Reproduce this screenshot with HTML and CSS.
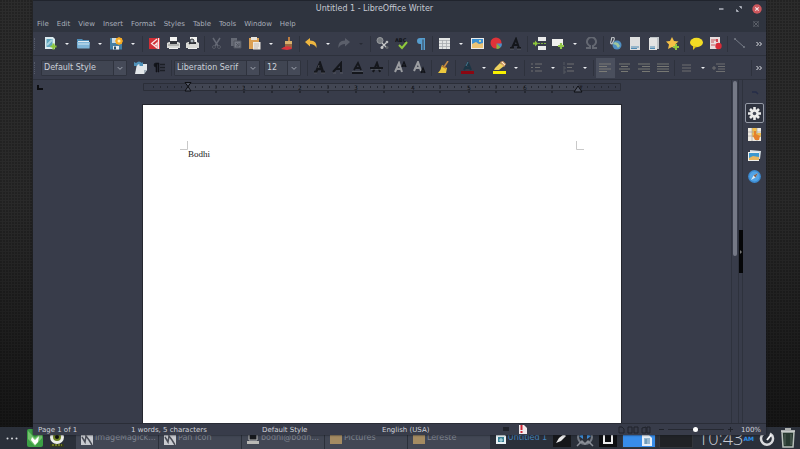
FILE: index.html
```html
<!DOCTYPE html>
<html lang="en">
<head>
<meta charset="utf-8">
<title>Untitled 1 - LibreOffice Writer</title>
<link rel="stylesheet" href="styles.css">
</head>
<body>
<footer class="taskbar">
  <button class="dots" aria-label="Menu"><svg width="12" height="3" viewBox="0 0 12 3"><g fill="#d8dade"><circle cx="1.5" cy="1.5" r="1"/><circle cx="6" cy="1.5" r="1"/><circle cx="10.500" cy="1.5" r="1"/></g></svg></button>
  <button class="launcher" aria-label="Midori"><svg width="16" height="18" viewBox="0 0 16 18"><rect width="16" height="18" rx="2" fill="#3c9f45"/><path d="M1 2L8 9l7-7v7l-7 8-7-7z" fill="#73c36d"/><path d="M5 8l3 3 4-4-1 6-3 3-4-5z" fill="#fff"/></svg></button>
  <button class="launcher" aria-label="Player"><svg width="16" height="18" viewBox="0 0 16 18"><circle cx="8" cy="8" r="7" fill="#eceee8"/><circle cx="8" cy="8" r="4" fill="#708326"/><circle cx="8" cy="8" r="2" fill="#111"/><path d="M1 15h14v3H1z" fill="#33391d"/><path d="M3 16h10" stroke="#a7b52c" stroke-dasharray="2 1"/></svg></button>
  <div class="tasks">
    <button class="task"><svg width="12" height="14" viewBox="0 0 12 14"><path d="M0 0h12v14H0z" fill="#c9cbd0"/><path d="M1 6l3 5 1-6 3 4 3 5" fill="none" stroke="#4a4d57" stroke-width="1.500"/></svg><span>ImageMagick...</span></button>
    <button class="task"><svg width="12" height="14" viewBox="0 0 12 14"><path d="M0 0h12v14H0z" fill="#c9cbd0"/><path d="M1 6l3 5 1-6 3 4 3 5" fill="none" stroke="#4a4d57" stroke-width="1.500"/></svg><span>Pan icon</span></button>
    <button class="task"><svg width="12" height="14" viewBox="0 0 12 14"><path d="M2 2h8v7H2z" fill="#16181c" stroke="#bbb"/><path d="M0 10h12v3H0z" fill="#b9b9b6"/></svg><span>bodhi@bodh...</span></button>
    <button class="task"><svg width="12" height="14" viewBox="0 0 12 14"><path d="M0 2h5l1 2h6v9H0z" fill="#a48b62"/></svg><span>Pictures</span></button>
    <button class="task"><svg width="12" height="14" viewBox="0 0 12 14"><path d="M0 2h5l1 2h6v9H0z" fill="#a48b62"/></svg><span>Lereste</span></button>
    <button class="task current"><svg width="10" height="12" viewBox="0 0 10 12"><path d="M0 1h7l3 3v8H0z" fill="#e7f0f3"/><path d="M2 5h6v5H2z" fill="#3b8297"/><path d="M3 8h4M5 6v4" stroke="#bfe0e5"/></svg><span>Untitled 1</span></button>
  </div>
  <div class="tray">
    <button aria-label="Editor"><svg width="18" height="18" viewBox="0 0 18 18"><path d="M0 0h18v18H0z" fill="#16171a"/><path d="M3 14l3-5 5-4 2 2-5 5z" fill="#e8e8e8"/></svg></button>
    <button aria-label="Updates"><svg width="20" height="18" viewBox="0 0 20 18"><circle cx="10" cy="8" r="7" fill="none" stroke="#737983" stroke-width="2"/><path d="M4 7l4-2v5zM16 7l-4-2v5z" fill="#3d8bd4"/><path d="M2 17l5-5 3 3 3-3 5 5" fill="none" stroke="#8a8e96" stroke-width="1.500"/></svg></button>
    <button aria-label="Clipboard"><svg width="18" height="18" viewBox="0 0 18 18"><path d="M0 0h18v18H0z" fill="#0e0f12"/><path d="M5 3h8v11H5z" fill="none" stroke="#ededed" stroke-width="2"/></svg></button>
  </div>
  <div class="pager">
    <button class="desk on" aria-label="Desktop 1"><svg width="10" height="11" viewBox="0 0 10 11"><path d="M0 0h7l3 3v8H0z" fill="#e8f0f8"/><path d="M2 4h6M2 6h6M2 8h6M4 4v5" stroke="#4680a8"/></svg></button>
    <button class="desk" aria-label="Desktop 2"></button>
  </div>
  <time class="clock">10:43<small>AM</small></time>
  <button class="gauge" aria-label="Power"><svg width="16" height="18" viewBox="0 0 16 18"><path d="M11 4.500a6 6 0 1 1-6 0" fill="none" stroke="#d9dadd" stroke-width="2.500"/><path d="M8 11l4-5" stroke="#fff" stroke-width="2"/></svg></button>
  <button class="trash" aria-label="Trash"><svg width="16" height="20" viewBox="0 0 16 20"><path d="M2 4h12l-1 15H3z" fill="#283a31" stroke="#b7bfba" stroke-width="1.500"/><path d="M1 3h14M5 1h6" stroke="#d9dcd9" stroke-width="1.500"/><path d="M5 6v11M11 6v11" stroke="#53635b"/></svg></button>
</footer>

<main class="window">
  <header class="titlebar">
    <h1>Untitled 1 - LibreOffice Writer</h1>
    <div class="controls">
      <button aria-label="Minimize"><svg width="10" height="10" viewBox="0 0 10 10"><path d="M3 5h4.500" stroke="#c4c8d2" stroke-width="1.300"/></svg></button>
      <button aria-label="Restore"><svg width="10" height="10" viewBox="0 0 10 10"><path d="M5.500 2.500h2v2zM2.500 5.500v2h2z" fill="#c4c8d2" stroke="#c4c8d2" stroke-width=".6"/></svg></button>
      <button aria-label="Close"><svg width="10" height="10" viewBox="0 0 10 10"><circle cx="5" cy="5" r="4.700" fill="#cc575d"/><path d="M3.300 3.300l3.400 3.400M6.700 3.300L3.300 6.700" stroke="#f4e3e4" stroke-width="1.100"/></svg></button>
    </div>
  </header>
  <nav class="menubar">
    <button>File</button><button>Edit</button><button>View</button><button>Insert</button><button>Format</button><button>Styles</button><button>Table</button><button>Tools</button><button>Window</button><button>Help</button>
    <button class="docclose" aria-label="Close document"><svg width="6" height="6" viewBox="0 0 6 6"><path d="M1 1l4 4M5 1L1 5M0 0h6v6H0z" fill="none" stroke="#5b5f68"/></svg></button>
  </nav>

  <div class="toolbar standard">
    <i class="grip"></i>
    <button class="tool" aria-label="New"><svg viewBox="0 0 13 13"><path d="M1 0h8l2 2v10H1z" fill="#dcebf0"/><path d="M2.500 2h6v8h-6z" fill="#5fa5bf"/><path d="M3 8l5-5" stroke="#a8d2de" stroke-width="2"/><path d="M9.500 6.500v6M6.500 9.500h6" stroke="#8cc63a" stroke-width="2.200"/></svg></button><button class="drop" aria-label="New options"></button>
    <button class="tool" aria-label="Open"><svg viewBox="0 0 13 13"><path d="M0 2h5l1 1h6v8H0z" fill="#4e8db8"/><path d="M1 4h11v2H1z" fill="#e4edf2"/><path d="M0 5h13l-.5 6.500H.5z" fill="#7fb5d8"/><path d="M1 6h11v2H1z" fill="#a8cee5"/></svg></button><button class="drop" aria-label="Open options"></button>
    <button class="tool" aria-label="Save"><svg viewBox="0 0 13 13"><path d="M0 1h12v11.500H0z" fill="#447fa4"/><path d="M2 1h6v5H2z" fill="#c9dce7"/><path d="M3 9h6v3.500H3z" fill="#e6edf0"/><path d="M4 9.500h2v3H4z" fill="#2f5268"/><circle cx="9" cy="4" r="3.500" fill="#f5a923"/><path d="M9 0v8M5 4h8M6.200 1.200l5.600 5.600M11.800 1.200L6.200 6.800" stroke="#f5a923"/><circle cx="9" cy="4" r="1.500" fill="#fff0b6"/></svg></button><button class="drop" aria-label="Save options"></button>
    <i class="sep"></i>
    <button class="tool" aria-label="Export PDF"><svg viewBox="0 0 13 13"><path d="M1 1h11v11H1z" fill="#d12f36"/><path d="M9 2L3.500 6.500 9 11V6L6 9M10.500 1v11" fill="none" stroke="#f8e8e8" stroke-width="1.200"/></svg></button>
    <button class="tool" aria-label="Print"><svg viewBox="0 0 13 13"><path d="M3 0h7v6H3z" fill="#f4f4f2"/><path d="M0 6l2-1h9l2 1v5H0z" fill="#d9dad7"/><path d="M3 4h7v3H3z" fill="#33353b"/><path d="M1 8h11" stroke="#8c8e8d"/><path d="M2 11h9v1H2z" fill="#f3f3f1"/></svg></button>
    <button class="tool" aria-label="Print preview"><svg viewBox="0 0 13 13"><path d="M4 0h7v6H4z" fill="#f4f4f2"/><path d="M0 6l2-1h9l2 1v5H0z" fill="#d9dad7"/><path d="M3 5h7v2H3z" fill="#33353b"/><path d="M2 11h9v1H2z" fill="#f3f3f1"/><circle cx="6" cy="4" r="2" fill="#a9b2b9" stroke="#30333a"/><path d="M4.500 5.500L3 7" stroke="#30333a" stroke-width="1.500"/></svg></button>
    <i class="sep"></i>
    <button class="tool" aria-label="Cut"><svg viewBox="0 0 13 13"><path d="M3 1l5 8M10 1L5 9" stroke="#656975" stroke-width="1.500"/><circle cx="4" cy="10" r="1.500" fill="none" stroke="#565a65"/><circle cx="9" cy="10" r="1.500" fill="none" stroke="#565a65"/></svg></button>
    <button class="tool" aria-label="Copy"><svg viewBox="0 0 13 13"><path d="M2 1h6v8H2z" fill="#666a75"/><path d="M5 4h7v7H5z" fill="#757984" stroke="#50545f"/><path d="M7 6l3 3M10 6v3H7" stroke="#50545f" fill="none"/></svg></button>
    <button class="tool" aria-label="Paste"><svg viewBox="0 0 13 13"><path d="M1 1h10v11H1z" fill="#dca052"/><path d="M3 0h6v3H3z" fill="#e8e5dd"/><path d="M5 5h7.500v7.500H5z" fill="#eee9e0"/><path d="M6 7h5M6 9h5M6 11h4" stroke="#b4aea5" stroke-width=".7"/></svg></button><button class="drop" aria-label="Paste options"></button>
    <button class="tool" aria-label="Clone formatting"><svg viewBox="0 0 13 13"><path d="M7 0h2v4H7z" fill="#bc7c41"/><path d="M4 4h7v3H4z" fill="#d6b06c"/><path d="M4 7h7v4H4z" fill="#9a6741"/><path d="M0 12q4-4 10-2l1 2-5 1z" fill="#d8343d"/></svg></button>
    <i class="sep"></i>
    <button class="tool" aria-label="Undo"><svg viewBox="0 0 13 13"><path d="M0 5l5-4v2.500c5 0 7 3 6.500 7.500C10 8 8 7 5 7v2.500z" fill="#eeb640"/></svg></button><button class="drop" aria-label="Undo history"></button>
    <button class="tool" aria-label="Redo"><svg viewBox="0 0 13 13"><path d="M12 5L7 1v2.500C2 3.500 0 6.500.5 11 2 8 4 7 7 7v2.500z" fill="#5b5f6b"/></svg></button><button class="drop dim" aria-label="Redo history"></button>
    <i class="sep"></i>
    <button class="tool" aria-label="Find and replace"><svg viewBox="0 0 13 13"><circle cx="4" cy="3.500" r="3" fill="#777b80" stroke="#989b9e"/><path d="M6 6l5 5M11 5l-5 5" stroke="#c8c9c9" stroke-width="1.200"/><circle cx="11" cy="5" r="1.300" fill="#b8babb"/><circle cx="6" cy="10.500" r="1.500" fill="#c8c9c9"/><circle cx="11" cy="10.500" r="1.500" fill="#5f6267"/></svg></button>
    <button class="tool" aria-label="Spelling"><svg viewBox="0 0 13 13"><text x="0" y="4.500" class="abc">ABC</text><path d="M4 8l3 3 5-6" fill="none" stroke="#8fc93b" stroke-width="2"/></svg></button>
    <button class="tool" aria-label="Formatting marks"><svg viewBox="0 0 13 13"><path d="M11 1H6a3 3 0 0 0 0 6h1v6h1.500V2.500H9.500V13H11z" fill="#569dce"/></svg></button>
    <i class="sep"></i>
    <button class="tool" aria-label="Table"><svg viewBox="0 0 13 13"><path d="M1 1h11v11H1z" fill="#e2e4e4"/><path d="M1 3.500h11M1 6.500h11M1 9.500h11M4.500 3v9M8.500 3v9" stroke="#a7abae" stroke-width=".8"/></svg></button><button class="drop" aria-label="Table options"></button>
    <button class="tool" aria-label="Image"><svg viewBox="0 0 13 13"><path d="M0 1h13v11H0z" fill="#ececea"/><path d="M1 2h11v9H1z" fill="#3d91d2"/><path d="M1 7l4-2 3 2 4-1v5H1z" fill="#edc474"/><circle cx="9" cy="4" r="1" fill="#f5ee9c"/></svg></button>
    <button class="tool" aria-label="Chart"><svg viewBox="0 0 13 13"><circle cx="6" cy="6" r="5.500" fill="#df3339"/><path d="M6.500 6.500H12a5.500 5.500 0 0 1-1.500 4z" fill="#4c8ec9"/><path d="M6.500 6.500l4 4a5.500 5.500 0 0 1-4 1.500z" fill="#83b646"/></svg></button>
    <button class="tool" aria-label="Text box"><svg viewBox="0 0 13 13"><path d="M1 11h4M8 11h4M3 11l4-9 3 9M4 8h5" fill="none" stroke="#14161b" stroke-width="2"/><path d="M1 12h4M8 12h4" stroke="#777b82" stroke-width=".5"/></svg></button>
    <i class="sep"></i>
    <button class="tool" aria-label="Page break"><svg viewBox="0 0 13 13"><path d="M5 0h8v4H5zM5 9h8v4H5z" fill="#e9eaea"/><path d="M5 6.500h8" stroke="#7daf3f" stroke-dasharray="2 1"/><path d="M2 3.500L5 6.500 2 9.500V7.500H0v-2h2z" fill="#8dc63a"/></svg></button>
    <button class="tool" aria-label="Field"><svg viewBox="0 0 13 13"><path d="M0 2h11v7H0z" fill="#efefed"/><path d="M9 6v6M6 9h6" stroke="#92c54a" stroke-width="2.200"/></svg></button><button class="drop" aria-label="Field options"></button>
    <button class="tool" aria-label="Special character"><svg viewBox="0 0 13 13"><path d="M1 11h4V9A4.500 4.500 0 1 1 8 9v2h4" fill="none" stroke="#646872" stroke-width="2"/></svg></button>
    <i class="sep"></i>
    <button class="tool" aria-label="Hyperlink"><svg viewBox="0 0 13 13"><circle cx="8" cy="8" r="4.500" fill="#4f8fc3"/><path d="M6 5l3 1 2 3-2 2-2-3-3-1z" fill="#9fc69c"/><path d="M3 0q3 0 2 3L3 7Q1 7 2 4z" fill="none" stroke="#c9cdd0" stroke-width="1.100"/></svg></button>
    <button class="tool" aria-label="Footnote"><svg viewBox="0 0 13 13"><path d="M2 0h10v13H2z" fill="#dedfdf"/><path d="M3 10h8M3 11.500h6" stroke="#518cb4"/></svg></button>
    <button class="tool" aria-label="Endnote"><svg viewBox="0 0 13 13"><path d="M3 0h9v12H3z" fill="#bfc4c8"/><path d="M2 1h8v12H2z" fill="#e3e4e4"/><path d="M3 10h5M3 11.500h5" stroke="#518cb4"/></svg></button>
    <button class="tool" aria-label="Bookmark"><svg viewBox="0 0 13 13"><path d="M6 0l2 4 4.500.5L9 7.500l1 4.500-4-2-4 2 1-4.500L0 4.500 4 4z" fill="#f5c047"/><path d="M10 7v6M7 10h6" stroke="#8ec63f" stroke-width="2"/></svg></button>
    <i class="sep"></i>
    <button class="tool" aria-label="Comment"><svg viewBox="0 0 13 13"><ellipse cx="6.500" cy="5.500" rx="6.500" ry="4.700" fill="#f2dc24"/><path d="M3 9v4l4-4z" fill="#e2c51c"/></svg></button>
    <button class="tool" aria-label="Track changes"><svg viewBox="0 0 13 13"><path d="M1 0h10v12H1z" fill="#e8dddd"/><path d="M2 3h5M2 5h3M2 8h4" stroke="#c7575c" stroke-width="1"/><path d="M7 2h2v3H7z" fill="#cf4951"/><circle cx="9.500" cy="9" r="3.200" fill="#d92c38"/></svg></button>
    <i class="sep"></i>
    <button class="tool" aria-label="Line"><svg viewBox="0 0 13 13"><path d="M2 2l9 8" stroke="#767b86"/><circle cx="2" cy="2" r="1" fill="#767b86"/><circle cx="11" cy="10" r="1" fill="#767b86"/></svg></button>
    <button class="more" aria-label="More"><svg width="6" height="6" viewBox="0 0 6 6"><path d="M.5 1l2 2-2 2M3.500 1l2 2-2 2" fill="none" stroke="#e3e5e9"/></svg></button>
  </div>

  <div class="toolbar format">
    <i class="grip"></i>
    <span class="combo style"><select aria-label="Paragraph style"><option>Default Style</option></select><svg viewBox="0 0 13 14"><path d="M4 6l2.500 2.500L9 6" fill="none" stroke="#aab0bb"/></svg></span>
    <button class="tool" aria-label="Update style"><svg viewBox="0 0 13 13"><path d="M3 3h10v6l-3 4H1z" fill="#e3e7ea"/><path d="M13 9h-3v4z" fill="#a4b1bb"/><path d="M0 5V1l2 1q3-3 6 0l1-1v4H5l1-1Q4 2 3 5z" fill="#4f91b9"/></svg></button>
    <button class="tool" aria-label="New style"><svg viewBox="0 0 13 13"><path d="M6 2H3a2 2 0 0 0 0 4v5h1V3h1v8h1z" fill="#111318" stroke="#111318" stroke-width=".6"/><path d="M7 3.500h5M7 6.500h5M7 9.500h5" stroke="#1c1f26" stroke-width="1.300"/></svg></button>
    <i class="sep"></i>
    <span class="combo font"><select aria-label="Font name"><option>Liberation Serif</option></select><svg viewBox="0 0 13 14"><path d="M4 6l2.500 2.500L9 6" fill="none" stroke="#aab0bb"/></svg></span>
    <span class="combo size"><select aria-label="Font size"><option>12</option></select><svg viewBox="0 0 13 14"><path d="M4 6l2.500 2.500L9 6" fill="none" stroke="#aab0bb"/></svg></span>
    <i class="sep"></i>
    <button class="tool" aria-label="Bold"><svg viewBox="0 0 13 13"><path d="M1 11h3M8 11h4M3 11l4-9 3 9M4 8h5" fill="none" stroke="#15171c" stroke-width="2.400"/><path d="M1 12h3M8 12h4M6 4L5 7" stroke="#80838a" stroke-width=".5"/></svg></button>
    <button class="tool" aria-label="Italic"><svg viewBox="0 0 13 13"><path d="M1 11l8-9 0 9M4 8h5" fill="none" stroke="#15171c" stroke-width="2"/><path d="M1 12h3M8 12h3" stroke="#70737b" stroke-width=".5"/></svg></button>
    <button class="tool" aria-label="Underline"><svg viewBox="0 0 13 13"><path d="M3 9l4-7 3 7M4 7h5M1 12h11" fill="none" stroke="#15171c" stroke-width="1.800"/><path d="M1 10.500h11" stroke="#60646c" stroke-width=".6"/></svg></button>
    <button class="tool" aria-label="Strikethrough"><svg viewBox="0 0 13 13"><path d="M3 11l4-9 3 9M0 7h13" fill="none" stroke="#15171c" stroke-width="2"/><path d="M1 8.500h10" stroke="#60646c" stroke-width=".6"/></svg></button>
    <i class="sep"></i>
    <button class="tool" aria-label="Superscript"><svg viewBox="0 0 13 13"><path d="M1 11l4-9 3 9M2 8h5" fill="none" stroke="#9b9da1" stroke-width="2"/><path d="M8 6l2-5 2 5M8.500 5h3" fill="none" stroke="#111318" stroke-width="1.300"/></svg></button>
    <button class="tool" aria-label="Subscript"><svg viewBox="0 0 13 13"><path d="M1 10l4-9 3 9M2 7h5" fill="none" stroke="#9b9da1" stroke-width="2"/><path d="M8 12l2-5 2 5M8.500 11h3" fill="none" stroke="#111318" stroke-width="1.300"/></svg></button>
    <i class="sep"></i>
    <button class="tool" aria-label="Clear formatting"><svg viewBox="0 0 13 13"><path d="M11 0L7 6" stroke="#c68a45" stroke-width="1.500"/><path d="M5 4l5 3-1 5H1q3-3 4-8z" fill="#ecc83d"/><path d="M5 5l4 2" stroke="#b5762e" stroke-width="1.500"/></svg></button>
    <i class="sep"></i>
    <button class="tool" aria-label="Font colour"><svg viewBox="0 0 13 13"><path d="M3 9l4-7 3 7M4 7h5" fill="none" stroke="#1b3544" stroke-width="2"/><path d="M5 5l2-4" stroke="#487992"/><path d="M0 10h13v3H0z" fill="#8b0711"/></svg></button><button class="drop" aria-label="Font colours"></button>
    <button class="tool" aria-label="Highlight"><svg viewBox="0 0 13 13"><path d="M2 7l5-5 4 3-5 4H1z" fill="#eed25e"/><path d="M7 1l3-1 3 3-2 3z" fill="#e1a76c"/><path d="M9 1l3 3" stroke="#f4eee0"/><path d="M0 10h13v3H0z" fill="#f8f000"/></svg></button><button class="drop" aria-label="Highlight colours"></button>
    <i class="sep"></i>
    <button class="tool" aria-label="Bullets"><svg viewBox="0 0 13 13"><path d="M1 3h2M1 6.500h2M1 10h2M5 3h7M5 6.500h5M5 10h7" stroke="#6e6f70"/></svg></button><button class="drop" aria-label="Bullet options"></button>
    <button class="tool" aria-label="Numbering"><svg viewBox="0 0 13 13"><path d="M2 1v3M1 6h2v2H1M1 10h2v2H1" stroke="#555961" fill="none"/><path d="M5 3h7M5 6.500h5M5 10h7" stroke="#6e6f70"/></svg></button><button class="drop" aria-label="Numbering options"></button>
    <i class="sep"></i>
    <button class="tool pressed" aria-label="Align left"><svg viewBox="0 0 13 13"><path d="M0 3h12M0 5.500h8M0 8h12M0 10.500h8" stroke="#7b7b76"/></svg></button>
    <button class="tool" aria-label="Center"><svg viewBox="0 0 13 13"><path d="M1 3h11M3 5.500h7M1 8h11M3 10.500h7" stroke="#777873"/></svg></button>
    <button class="tool" aria-label="Align right"><svg viewBox="0 0 13 13"><path d="M1 3h12M5 5.500h8M1 8h12M5 10.500h8" stroke="#777873"/></svg></button>
    <button class="tool" aria-label="Justify"><svg viewBox="0 0 13 13"><path d="M1 3h12M1 5.500h12M1 8h12M1 10.500h12" stroke="#777873"/></svg></button>
    <i class="sep"></i>
    <button class="tool" aria-label="Line spacing"><svg viewBox="0 0 13 13"><path d="M2 4h9M2 7h9M2 10h9" stroke="#6e6f70"/></svg></button><button class="drop" aria-label="Spacing options"></button>
    <button class="tool" aria-label="Increase indent"><svg viewBox="0 0 13 13"><path d="M4 3h9M6 5.500h7M6 8h7M4 10.500h9" stroke="#6e6f70"/><path d="M0 7h4M2 5v4" stroke="#6e6f70"/></svg></button>
    <i class="sep last"></i>
    <button class="more" aria-label="More"><svg width="6" height="6" viewBox="0 0 6 6"><path d="M.5 1l2 2-2 2M3.500 1l2 2-2 2" fill="none" stroke="#e3e5e9"/></svg></button>
  </div>

  <div class="work">
    <section class="canvas">
      <div class="rulerbar">
        <svg class="tabtype" width="6" height="6" viewBox="0 0 6 6"><path d="M1 0v4h5" fill="none" stroke="#0b0c10" stroke-width="2"/></svg>
        <svg class="ruler" viewBox="0 0 478 14" width="478" height="14">
          <defs><pattern id="ticks" width="7" height="9" x="3" patternUnits="userSpaceOnUse"><path d="M.5 4v2" stroke="#262932"/></pattern></defs>
          <path d="M45 1h390v8H45z" fill="#424653"/>
          <path d="M.5 1.500h477v7H.5z" fill="none" stroke="#2b2e38"/>
          <path d="M4 1h470v8H4z" fill="url(#ticks)"/>
          <path d="M73 3v4M129 3v4M185 3v4M241 3v4M297 3v4M353 3v4M409 3v4" stroke="#22252d"/>
          <g class="rulernum"><text x="101" y="8">1</text><text x="157" y="8">2</text><text x="213" y="8">3</text><text x="270" y="8">4</text><text x="326" y="8">5</text><text x="382" y="8">6</text><text x="438" y="8">7</text></g>
          <path d="M73 9v2M101 9v2M129 9v2M157 9v2M185 9v2M213 9v2M241 9v2M270 9v2M297 9v2M326 9v2M353 9v2M382 9v2M409 9v2" stroke="#14161b"/>
          <path d="M42 .5h6l-3 4zM42 9l3-4.500L48 9zM431 10l4-6 4 6z" fill="#505563" stroke="#0d0e12"/>
        </svg>
      </div>
      <article class="page">
        <div class="margins"><svg width="8" height="9" viewBox="0 0 8 9"><path d="M7.500 0v8.500H0" fill="none" stroke="#c9c9c9"/></svg><svg width="8" height="9" viewBox="0 0 8 9"><path d="M.5 0v8.500H8" fill="none" stroke="#c9c9c9"/></svg></div>
        <p contenteditable="true" spellcheck="false">Bodhi</p>
      </article>
    </section>
    <div class="scroll"><i></i></div>
    <div class="splitter"><button aria-label="Hide sidebar"><svg width="4" height="6" viewBox="0 0 4 6"><path d="M1 1l2 2-2 2z" fill="#777"/></svg></button></div>
    <aside class="sidebar">
      <button aria-label="Sidebar settings"><svg width="13" height="13" viewBox="0 0 13 13"><path d="M4 6h4l2 2" fill="none" stroke="#252c48" stroke-width="1.500"/></svg></button>
      <button class="chosen" aria-label="Properties"><svg width="13" height="13" viewBox="0 0 13 13"><path d="M6.500 0v13M0 6.500h13M2 2l9 9M11 2l-9 9" stroke="#ececeb" stroke-width="2.600"/><circle cx="6.500" cy="6.500" r="4.300" fill="#ececeb"/><circle cx="6.500" cy="6.500" r="1.800" fill="#454956"/></svg></button>
      <button aria-label="Styles"><svg width="13" height="13" viewBox="0 0 13 13"><path d="M0 0h13v13H0z" fill="#eeeae2"/><path d="M4 0h5v5h4v4H4z" fill="#f2bd4b"/><path d="M0 4h13M0 8h13M4 0v13M9 0v13" stroke="#a9a59e" stroke-width=".7"/><path d="M6 3v4l-1 1 2 4h4l1-4-4-2V3z" fill="#e5802c"/></svg></button>
      <button aria-label="Gallery"><svg width="13" height="13" viewBox="0 0 13 13"><path d="M2 1l11 1-1 8-10-1z" fill="#d7dfe4"/><path d="M0 3h11v9H0z" fill="#f0f0ed"/><path d="M1 4h10v7H1z" fill="#3c98cf"/><path d="M1 9l4-2 6 1v3H1z" fill="#e9b75f"/></svg></button>
      <button aria-label="Navigator"><svg width="13" height="13" viewBox="0 0 13 13"><circle cx="6.500" cy="6.500" r="6.400" fill="#3c8ad0"/><circle cx="6.500" cy="6.500" r="5" fill="#51a3e6"/><path d="M10 3L7.500 7.500 3 10l2.500-4.500z" fill="#dcebf4"/><path d="M10 3L7.500 7.500l-2-2z" fill="#85604e"/></svg></button>
    </aside>
  </div>

  <div class="status">
    <span class="pages">Page 1 of 1</span>
    <span class="words">1 words, 5 characters</span>
    <span class="pstyle">Default Style</span>
    <span class="lang">English (USA)</span>
    <span class="marks"><svg width="8" height="8" viewBox="0 0 8 8"><path d="M1 2h6v4H1z" fill="#20232b"/></svg><svg width="8" height="9" viewBox="0 0 8 9"><path d="M0 0h5l3 3v6H0z" fill="#f1e9eb"/><path d="M1.500 0h2v5h-2zM1.500 6h2v2h-2z" fill="#cf2636"/></svg></span>
    <span class="views"><svg width="34" height="8" viewBox="0 0 34 8"><path d="M2 1h3l2 2v4H2zM11 1h4v6h-4zM17 1h4v6h-4zM25 7V2l4-1v6zM30 1h3v6h-3z" fill="none" stroke="#20232b"/></svg></span>
    <div class="zoom">
      <button aria-label="Zoom out"><svg width="5" height="5" viewBox="0 0 5 5"><path d="M0 2.500h5" stroke="#20232b"/></svg></button>
      <input type="range" min="0" max="100" value="50" aria-label="Zoom">
      <button aria-label="Zoom in"><svg width="5" height="5" viewBox="0 0 5 5"><path d="M0 2.500h5M2.500 0v5" stroke="#20232b"/></svg></button>
    </div>
    <span class="percent">100%</span>
  </div>
</main>
</body>
</html>
```
FILE: styles.css
```css
* { box-sizing: border-box; }
html, body { height: 100%; margin: 0; }
body {
  position: relative;
  overflow: hidden;
  font: 7px/10px "DejaVu Sans", sans-serif;
  color: #c6cad3;
  background:
    radial-gradient(circle at 1px 1px, rgba(0, 0, 0, .2) 1px, transparent 1px) 0 0 / 3px 3px,
    linear-gradient(#2c2c2c, #292929 45%, #141414);
}
button {
  display: flex;
  align-items: center;
  justify-content: center;
  padding: 0;
  border: 0;
  background: none;
  color: inherit;
  font: inherit;
}
svg { display: block; flex: none; }

/* Application window */
.window {
  position: absolute;
  inset: 0 34px 14px 33px;
  display: flex;
  flex-direction: column;
  background: #383c4a;
  box-shadow: 0 0 2px #15171c;
}
.titlebar {
  display: flex;
  align-items: center;
  height: 16px;
  padding-right: 4px;
  background: #2f343f;
  border-top: 1px solid #20242d;
}
.titlebar h1 {
  flex: 1;
  margin: 0;
  text-align: center;
  font-weight: 400;
  font-size: 8px;
}
.controls { display: flex; gap: 8px; }
.menubar {
  display: flex;
  align-items: center;
  gap: 8px;
  height: 16px;
  padding: 0 7px 0 4px;
  background: #2f343f;
  color: #a9afba;
}
.docclose { margin-left: auto; }

.toolbar {
  display: flex;
  align-items: center;
  height: 24px;
  border-bottom: 1px solid #2d313c;
}
.grip { width: 3px; height: 12px; margin: 0 4px 0 1px; border-left: 1px dotted #555a67; }
.tool { width: 19px; height: 20px; flex: none; }
.tool svg { width: 13px; height: 13px; }
.pressed { background: #4a4f5d; }
.drop { width: 14px; height: 20px; flex: none; }
.format .drop { width: 13px; }
.drop::after {
  content: "";
  border: 2px solid transparent;
  border-top-color: #eceef1;
  border-bottom: 0;
}
.drop.dim::after { border-top-color: #272a34; }
.sep { width: 1px; height: 16px; margin: 0 2px; flex: none; background: #2e323d; }
.last, .more { margin-left: auto; }
.more { margin-right: 4px; }
.last + .more { margin-left: 2px; }
.abc { font: bold 5px "DejaVu Sans", sans-serif; fill: #111318; }

.combo { position: relative; height: 16px; margin-right: 4px; flex: none; }
.combo select {
  width: 100%;
  height: 16px;
  padding: 0 13px 0 2px;
  appearance: none;
  border: 1px solid #2f333e;
  border-radius: 1px;
  background: #404552;
  color: #cbd0d9;
  font: inherit;
  font-size: 8px;
}
.combo svg {
  position: absolute;
  top: 1px;
  right: 1px;
  width: 13px;
  height: 14px;
  background: #454a58;
  border-left: 1px solid #2f333e;
  pointer-events: none;
}
.style { width: 86px; }
.font { width: 86px; }
.size { width: 37px; }

/* Document area */
.work { flex: 1; display: flex; min-height: 0; }
.canvas { flex: 1; display: flex; flex-direction: column; min-width: 0; overflow: hidden; }
.rulerbar {
  display: grid;
  grid-template-columns: 1fr auto 1fr;
  height: 24px;
  padding-top: 2px;
}
.tabtype { margin: 3px 0 0 4px; }
.rulernum { font-size: 6px; text-anchor: middle; fill: #14161b; }
.page {
  flex: 1;
  width: 480px;
  margin: 0 auto;
  padding: 36px 37px 0;
  background: #fff;
  border: 1px solid #24262e;
  border-bottom: 0;
  color: #222;
}
.margins { display: flex; justify-content: space-between; }
.page p {
  margin: 0 8px;
  font: 9px/8px "Liberation Serif", serif;
  outline: 0;
}
.scroll { width: 7px; border-left: 1px solid #2e323d; }
.scroll i { display: block; width: 4px; height: 51%; margin: 1px auto 0; border-radius: 2px; background: #757986; }
.splitter {
  display: flex;
  align-items: center;
  width: 5px;
  border: solid #2e323d;
  border-width: 0 1px;
}
.splitter button { width: 4px; height: 43px; background: #050608; }
.sidebar {
  display: flex;
  flex-direction: column;
  align-items: center;
  gap: 1px;
  width: 23px;
  padding-top: 2px;
}
.sidebar button { width: 19px; height: 20px; }
.sidebar .chosen { border: 1px solid #9499a5; border-radius: 2px; background: #2f333f; }

.status {
  display: flex;
  align-items: center;
  height: 12px;
  padding: 0 5px;
  border-top: 1px solid #2a2d37;
  color: #d0d3da;
  white-space: nowrap;
}
.pages { width: 93px; }
.words { width: 131px; }
.pstyle { width: 120px; }
.lang { width: 120px; }
.marks { display: flex; gap: 9px; }
.views { margin-left: auto; }
.zoom { display: flex; align-items: center; width: 74px; margin: 0 8px; }
.zoom input { flex: 1; min-width: 0; height: 8px; margin: 0 4px; appearance: none; background: linear-gradient(#262932, #262932) center / 100% 1px no-repeat; }
.zoom input::-webkit-slider-thumb { appearance: none; width: 5px; height: 5px; border-radius: 50%; background: #fff; }

/* Desktop panel */
.taskbar {
  position: absolute;
  inset: auto 0 0;
  display: flex;
  align-items: center;
  height: 22px;
  background: #2b303a;
}
.dots { width: 24px; }
.launcher { width: 22px; }
.tasks { display: flex; flex: 1; gap: 1px; min-width: 0; margin-left: 8px; }
.task {
  flex: 84 1 0;
  justify-content: flex-start;
  gap: 2px;
  height: 22px;
  min-width: 0;
  padding-left: 5px;
  overflow: hidden;
  background: #424754;
  color: #7e838f;
  font-size: 8px;
  white-space: nowrap;
}
.current { flex-grow: 58; background: #2b303a; color: #4584bd; }
.tray { display: flex; gap: 4px; margin-left: 4px; }
.pager { display: flex; gap: 3px; margin: 0 5px; }
.desk { width: 34px; height: 20px; background: #202226; border: 1px solid #33363c; }
.on { justify-content: flex-end; padding: 4px 3px 0 0; background: #388dea; }
.clock { width: 60px; font: 300 18px/20px "Open Sans", sans-serif; white-space: nowrap; }
.clock small { font: bold 6px "DejaVu Sans", sans-serif; color: #2c8ee8; vertical-align: 4px; }
.gauge { width: 18px; }
.trash { width: 24px; }
```
